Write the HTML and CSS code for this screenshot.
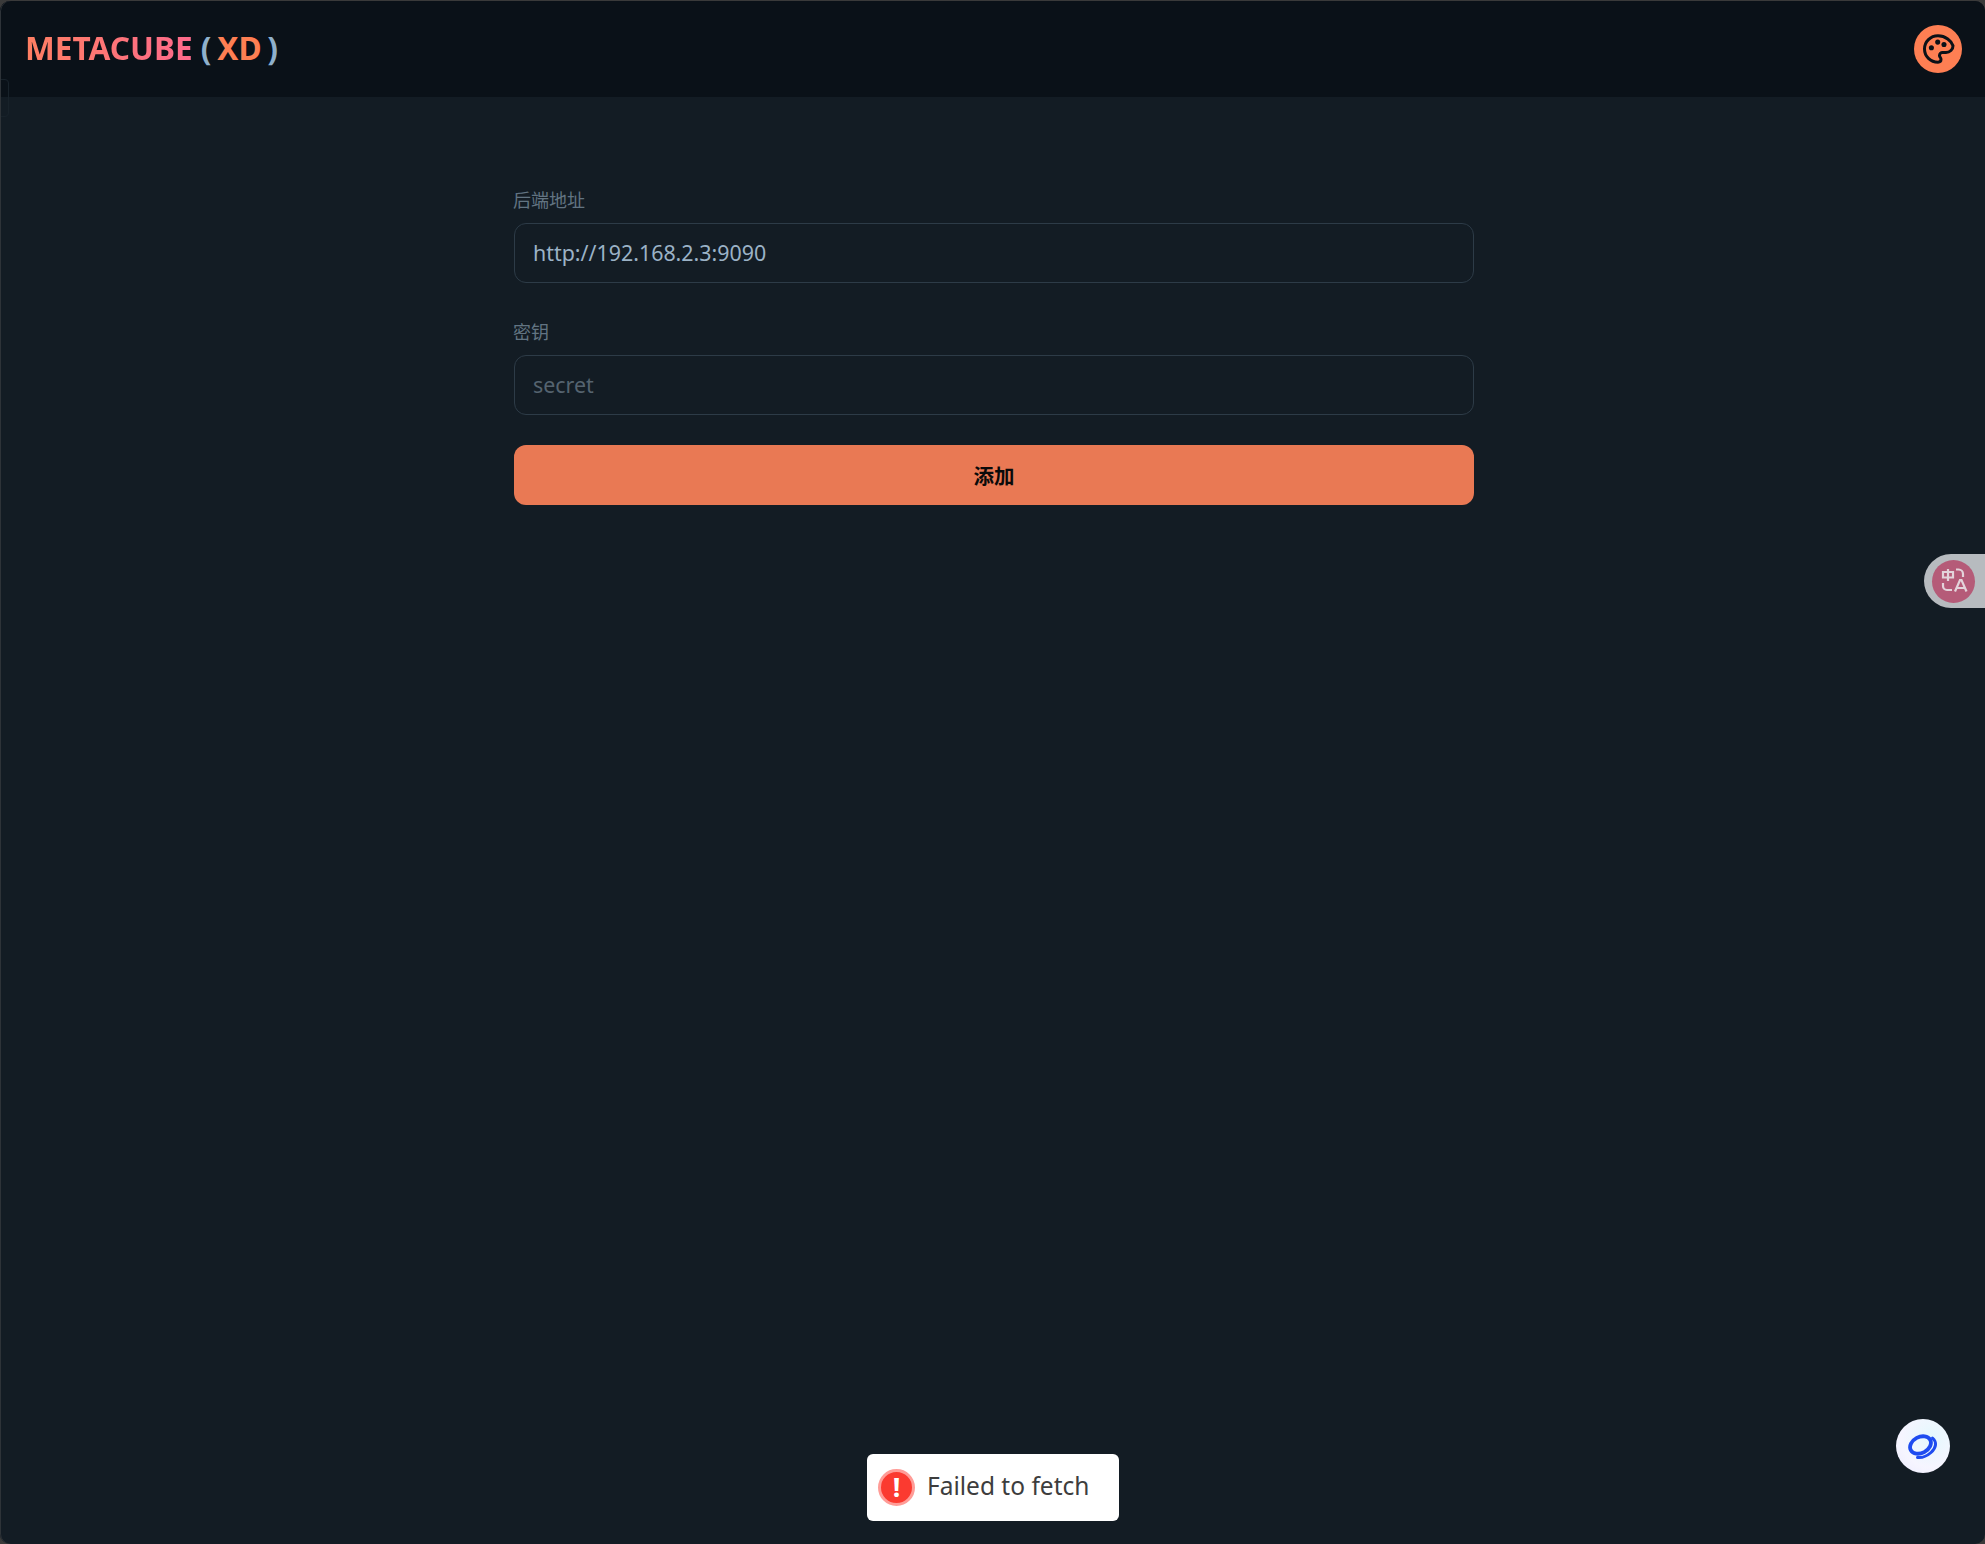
FILE: index.html
```html
<!DOCTYPE html>
<html lang="zh">
<head>
<meta charset="utf-8">
<title>METACUBE (XD)</title>
<link rel="stylesheet" href="styles.css">
</head>
<body>
<div class="app">
  <header class="topbar">
    <h1 class="brand"><span class="brand-name">METACUBE</span> <span class="paren">(</span> <span class="brand-xd">XD</span> <span class="paren">)</span></h1>
    <button class="theme-btn" aria-label="theme">
      <svg viewBox="0 0 24 24" width="36" height="36" fill="none" stroke="#0a1118" stroke-width="2" stroke-linecap="round" stroke-linejoin="round">
        <path d="M12 3.2c-5 0-9 3.9-9 8.8s4 8.8 9 8.8c1.3 0 2-.9 2-1.9 0-.5-.2-.9-.5-1.3-.3-.4-.5-.8-.5-1.3 0-1.1.9-1.900 2-1.900h2.300c2.600 0 4.700-2.100 4.700-4.600C21 6.600 17 3.200 12 3.200z"/>
        <g fill="#0a1118" stroke="none"><circle cx="7.600" cy="11.200" r="1.700"/><circle cx="11.800" cy="7.400" r="1.700"/><circle cx="16" cy="9" r="1.700"/></g>
      </svg>
    </button>
  </header>
  <main class="content">
    <form class="form">
      <div class="field">
        <label class="label">后端地址</label>
        <input class="input" type="text" value="http://192.168.2.3:9090">
      </div>
      <div class="field field-second">
        <label class="label">密钥</label>
        <input class="input" type="text" placeholder="secret">
      </div>
      <button class="submit" type="button">添加</button>
    </form>
  </main>
  <div class="edge-tab"></div>
  <div class="translate-tab">
    <span class="translate-icon">
      <svg viewBox="0 0 36 36" width="36" height="36" fill="none" stroke="#e3d3da" stroke-width="2.200">
        <path d="M7 9h10v5.500H7zM12 6v12"/>
        <path d="M20 6.500h2.500a4.500 4.500 0 0 1 4.500 4.500v3M7 20v3a4 4 0 0 0 4 4h5"/>
        <path d="M19 28.500l5-11.500h1.500l5 11.500M21 25h8"/>
      </svg>
    </span>
  </div>
  <div class="assistant">
    <svg viewBox="0 0 30 27" width="30" height="27" fill="none" stroke="#1f4cf0">
      <ellipse cx="12.500" cy="12" rx="11" ry="8" stroke-width="3.800" transform="rotate(-28 12.500 12)"/>
      <path d="M24.500 5c4.500 4 4 9.500-1.500 14.500-4 3.500-9 5.500-13.500 5" stroke-width="3" stroke-linecap="round"/>
    </svg>
  </div>
  <div class="toast">
    <span class="toast-icon">!</span>
    <span class="toast-text">Failed to fetch</span>
  </div>
</div>
</body>
</html>
```
FILE: styles.css
```css
* { box-sizing: border-box; }
html, body { margin: 0; height: 100%; background: #3a3a3a; }
body { font-family: "Noto Sans", "Noto Sans CJK SC", sans-serif; overflow: hidden; }
.app {
  position: relative;
  height: 1543px;
  margin-top: 1px;
  background: #131c24;
  border-radius: 10px;
  overflow: hidden;
}
.app::after {
  content: "";
  position: absolute;
  inset: 0;
  border-radius: 10px;
  box-shadow: inset 1px 0 #2e3338;
  pointer-events: none;
}
.topbar {
  height: 96px;
  background: #0a1118;
  display: flex;
  align-items: center;
  justify-content: space-between;
  padding: 0 23px 0 25px;
}
.brand {
  margin: 0;
  padding-bottom: 2px;
  font-size: 31.6px;
  line-height: 1;
  font-weight: 700;
  white-space: pre;
}
.brand-name {
  background: linear-gradient(90deg, #fe7f62, #fd6a8c);
  -webkit-background-clip: text;
  background-clip: text;
  color: transparent;
}
.paren { color: #8fb0cb; }
.brand-xd { color: #fe7f53; margin: 0 -2.5px; }
.theme-btn {
  width: 48px;
  height: 48px;
  padding: 0;
  border: 0;
  border-radius: 50%;
  background: #fe7f53;
  display: flex;
  align-items: center;
  justify-content: center;
}
.content { display: flex; justify-content: center; padding: 86px 0 0 3px; }
.form { width: 960px; display: flex; flex-direction: column; }
.field { display: flex; flex-direction: column; }
.field-second { margin-top: 32px; }
.label {
  font-size: 18px;
  line-height: 35px;
  margin-bottom: 5px;
  color: #627482;
  margin-left: -1px;
}
.input {
  height: 60px;
  padding: 0 18px 1px;
  background: transparent;
  border: 1px solid #2d3b47;
  border-radius: 12px;
  font: 400 21.4px "Noto Sans", sans-serif;
  color: #9bb2c6;
  outline: none;
}
.input::placeholder { color: #55636f; opacity: 1; }
.submit {
  margin-top: 30px;
  height: 60px;
  border: 0;
  border-radius: 12px;
  background: #e97954;
  color: #0a0a0a;
  font: 700 20.5px "Noto Sans CJK SC", sans-serif;
}
.edge-tab {
  position: absolute;
  left: -1px;
  top: 78px;
  width: 10px;
  height: 38px;
  border: 1px solid #18222a;
  border-radius: 0 4px 4px 0;
}
.translate-tab {
  position: absolute;
  right: 0;
  top: 553px;
  width: 61px;
  height: 54px;
  padding-left: 8px;
  background: #b7bbbf;
  border-radius: 27px 0 0 27px;
  display: flex;
  align-items: center;
}
.translate-icon {
  width: 43px;
  height: 43px;
  border-radius: 50%;
  background: #b55b78;
  display: flex;
  align-items: center;
  justify-content: center;
}
.assistant {
  position: absolute;
  left: 1896px;
  top: 1418px;
  width: 54px;
  height: 54px;
  border-radius: 50%;
  background: radial-gradient(circle at 65% 35%, #e4f8fd, #f6f5ff 60%, #ecebff);
  display: flex;
  align-items: center;
  justify-content: center;
}
.toast {
  position: absolute;
  left: 867px;
  top: 1453px;
  width: 252px;
  height: 67px;
  background: #fff;
  border-radius: 6px;
  display: flex;
  align-items: center;
  gap: 12px;
  padding-left: 11px;
}
.toast-icon {
  width: 37px;
  height: 37px;
  border-radius: 50%;
  background: #fb3a30;
  border: 3px solid #ff9c97;
  color: #fff;
  font: 700 27px/30px "Noto Sans", sans-serif;
  text-align: center;
}
.toast-text { font-size: 24.5px; line-height: 1; padding-bottom: 3px; color: #3d3d3d; }
```
